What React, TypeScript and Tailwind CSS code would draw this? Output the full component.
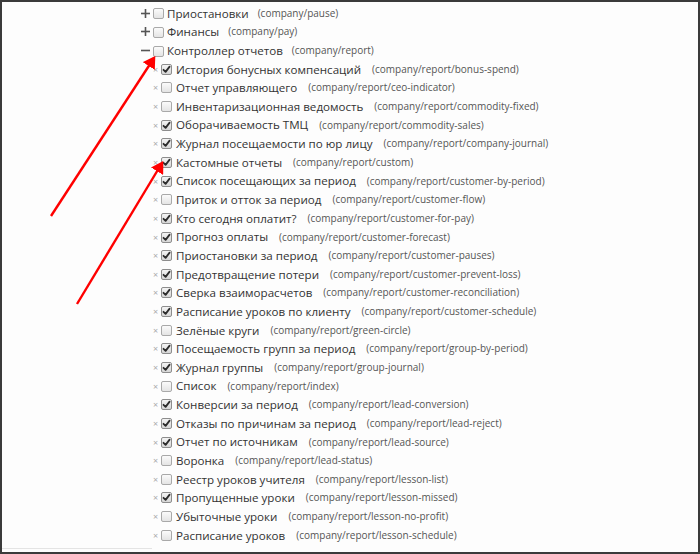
import React from 'react';

type Item = { label: string; path: string; checked: boolean };

const top: { label: string; path: string; open: boolean }[] = [
  { label: 'Приостановки', path: '(company/pause)', open: false },
  { label: 'Финансы', path: '(company/pay)', open: false },
  { label: 'Контроллер отчетов', path: '(company/report)', open: true },
];

const reports: Item[] = [
  { label: 'История бонусных компенсаций', path: '(company/report/bonus-spend)', checked: true },
  { label: 'Отчет управляющего', path: '(company/report/ceo-indicator)', checked: false },
  { label: 'Инвентаризационная ведомость', path: '(company/report/commodity-fixed)', checked: false },
  { label: 'Оборачиваемость ТМЦ', path: '(company/report/commodity-sales)', checked: true },
  { label: 'Журнал посещаемости по юр лицу', path: '(company/report/company-journal)', checked: true },
  { label: 'Кастомные отчеты', path: '(company/report/custom)', checked: true },
  { label: 'Список посещающих за период', path: '(company/report/customer-by-period)', checked: true },
  { label: 'Приток и отток за период', path: '(company/report/customer-flow)', checked: false },
  { label: 'Кто сегодня оплатит?', path: '(company/report/customer-for-pay)', checked: true },
  { label: 'Прогноз оплаты', path: '(company/report/customer-forecast)', checked: true },
  { label: 'Приостановки за период', path: '(company/report/customer-pauses)', checked: true },
  { label: 'Предотвращение потери', path: '(company/report/customer-prevent-loss)', checked: true },
  { label: 'Сверка взаиморасчетов', path: '(company/report/customer-reconciliation)', checked: true },
  { label: 'Расписание уроков по клиенту', path: '(company/report/customer-schedule)', checked: true },
  { label: 'Зелёные круги', path: '(company/report/green-circle)', checked: false },
  { label: 'Посещаемость групп за период', path: '(company/report/group-by-period)', checked: true },
  { label: 'Журнал группы', path: '(company/report/group-journal)', checked: true },
  { label: 'Список', path: '(company/report/index)', checked: false },
  { label: 'Конверсии за период', path: '(company/report/lead-conversion)', checked: true },
  { label: 'Отказы по причинам за период', path: '(company/report/lead-reject)', checked: true },
  { label: 'Отчет по источникам', path: '(company/report/lead-source)', checked: true },
  { label: 'Воронка', path: '(company/report/lead-status)', checked: false },
  { label: 'Реестр уроков учителя', path: '(company/report/lesson-list)', checked: false },
  { label: 'Пропущенные уроки', path: '(company/report/lesson-missed)', checked: true },
  { label: 'Убыточные уроки', path: '(company/report/lesson-no-profit)', checked: false },
  { label: 'Расписание уроков', path: '(company/report/lesson-schedule)', checked: false },
];

const Box = ({ checked }: { checked: boolean }) => (
  <span
    className={
      'inline-flex items-center justify-center w-[11px] h-[11px] rounded-[2px] border shrink-0 ' +
      (checked
        ? 'border-[#8d8d8d] bg-gradient-to-b from-[#f4f4f4] to-[#d6d6d6]'
        : 'border-[#a9a9a9] bg-gradient-to-b from-[#fbfbfb] to-[#e4e4e4]')
    }
  >
    {checked && (
      <svg width="9" height="9" viewBox="0 0 9 9">
        <path d="M1.5 4.8 L3.6 6.9 L7.6 1.6" fill="none" stroke="#2c2c2c" strokeWidth="1.8" strokeLinecap="round" strokeLinejoin="round" />
      </svg>
    )}
  </span>
);

const Toggle = ({ open }: { open: boolean }) => (
  <svg width="9" height="9" viewBox="0 0 9 9" className="shrink-0">
    <path d="M0 4.5 H9" stroke="#555" strokeWidth="1.6" />
    {!open && <path d="M4.5 0 V9" stroke="#555" strokeWidth="1.6" />}
  </svg>
);

export default function App() {
  return (
    <div
      className="relative w-[700px] h-[554px] overflow-hidden bg-[#fdfdfd] border-2 border-[#3b3b3b] text-[#333]"
      style={{ fontFamily: '"Open Sans", "Noto Sans", sans-serif' }}
    >
      <div className="pl-[139px] pt-[2px]">
        {top.map((t) => (
          <div key={t.label}>
            <div className="flex items-center h-[18.65px] whitespace-nowrap">
              <Toggle open={t.open} />
              <span className="ml-[3px]">
                <Box checked={false} />
              </span>
              <span className="ml-[3px] text-[11.6px]">{t.label}</span>
              <span className="ml-[9px] text-[10px] text-[#555]">{t.path}</span>
            </div>
            {t.open &&
              reports.map((r) => (
                <div key={r.path} className="flex items-center h-[18.65px] whitespace-nowrap pl-[12px]">
                  <span className="w-[8px] text-[9px] leading-none text-[#aaa]">×</span>
                  <Box checked={r.checked} />
                  <span className="ml-[4px] text-[11.6px]">{r.label}</span>
                  <span className="ml-[11px] text-[10px] text-[#555]">{r.path}</span>
                </div>
              ))}
          </div>
        ))}
      </div>

      {/* faint line of the panel below */}
      <div className="absolute left-0 bottom-[3px] w-[150px] h-px bg-[#e4e4e4]" />

      {/* red annotation arrows */}
      <svg className="absolute left-[-2px] top-[-2px] pointer-events-none" width="700" height="554">
        <defs>
          <marker id="head" markerWidth="6" markerHeight="6" refX="4" refY="3" orient="auto" markerUnits="strokeWidth">
            <path d="M0 0 L5 3 L0 6 Z" fill="#f00" />
          </marker>
        </defs>
        <line x1="51" y1="216" x2="154" y2="58" stroke="#f00" strokeWidth="2.4" markerEnd="url(#head)" />
        <line x1="77" y1="304" x2="162" y2="163" stroke="#f00" strokeWidth="2.4" markerEnd="url(#head)" />
      </svg>
    </div>
  );
}
